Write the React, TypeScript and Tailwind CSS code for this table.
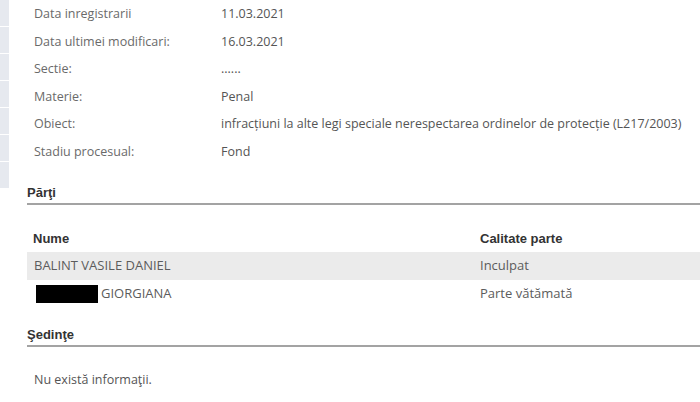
import React from 'react'

const info = [
  ['Data inregistrarii', '11.03.2021'],
  ['Data ultimei modificari:', '16.03.2021'],
  ['Sectie:', '......'],
  ['Materie:', 'Penal'],
  ['Obiect:', 'infracțiuni la alte legi speciale nerespectarea ordinelor de protecție (L217/2003)'],
  ['Stadiu procesual:', 'Fond'],
]

const SectionTitle = ({ title }: { title: string }) => (
  <div className="h-[23px] flex items-center border-b-2 border-[#a3a3a3] text-[13px] font-bold text-[#333]" style={{ fontFamily: '"Liberation Sans", Arial, sans-serif' }}>
    {title}
  </div>
)

export default function App() {
  return (
    <div className="w-[700px] h-[402px] bg-white flex overflow-hidden text-[#5c5c5c]" style={{ fontFamily: '"Open Sans", "Noto Sans", sans-serif' }}>
      <div className="w-[9px] flex flex-col">
        {[...Array(7)].map((_, i) => (
          <div key={i} className="h-[27px] bg-[#e6e9ef] border-b border-white" />
        ))}
      </div>
      <div className="flex-1 pl-[18px]">
        <div className="pt-[1px]">
          {info.map(([label, value]) => (
            <div key={label} className="h-[27.5px] flex items-center text-[12.5px] whitespace-nowrap">
              <div className="w-[194px] pl-[7px] text-[#6a6a6a]">{label}</div>
              <div className="text-[#555]">{value}</div>
            </div>
          ))}
        </div>

        <div className="mt-[16px]">
          <SectionTitle title="Părţi" />
        </div>

        <div className="mt-[21px] h-[26px] flex items-center text-[13px] font-bold text-[#333]" style={{ fontFamily: '"Liberation Sans", Arial, sans-serif' }}>
          <div className="w-[453px] pl-[6px]">Nume</div>
          <div>Calitate parte</div>
        </div>
        <div className="h-[28px] flex items-center bg-[#ebebeb] text-[13px]">
          <div className="w-[453px] pl-[7px]">BALINT VASILE DANIEL</div>
          <div>Inculpat</div>
        </div>
        <div className="h-[28px] flex items-center text-[13px]">
          <div className="w-[453px] pl-[9px] flex items-center">
            <span className="inline-block w-[62px] h-[18px] bg-black mr-[3px]" />
            GIORGIANA
          </div>
          <div>Parte vătămată</div>
        </div>

        <div className="mt-[16px]">
          <SectionTitle title="Şedinţe" />
        </div>

        <div className="mt-[24px] pl-[7px] text-[12.5px] text-[#555]">Nu există informaţii.</div>
      </div>
    </div>
  )
}
